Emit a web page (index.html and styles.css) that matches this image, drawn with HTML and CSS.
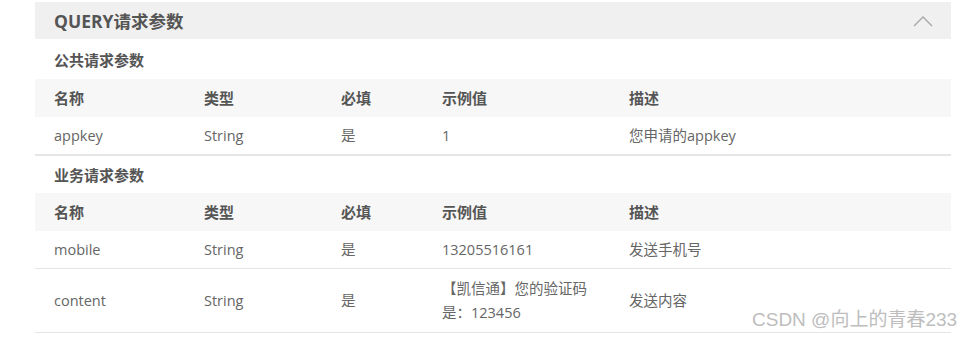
FILE: index.html
```html
<!DOCTYPE html>
<html lang="zh-CN">
<head>
<meta charset="utf-8">
<title>QUERY请求参数</title>
<link rel="stylesheet" href="styles.css">
</head>
<body>
<section class="panel">
  <header class="panel-head">
    <h2 class="panel-title">QUERY请求参数</h2>
    <svg class="chev" width="20" height="12" viewBox="0 0 20 12"><path d="M1 11 L10 2 L19 11" fill="none" stroke="#a8a8a8" stroke-width="1.4"/></svg>
  </header>

  <h3 class="group-title first">公共请求参数</h3>
  <div class="table table-end">
    <div class="row head"><div>名称</div><div>类型</div><div>必填</div><div>示例值</div><div>描述</div></div>
    <div class="row"><div>appkey</div><div>String</div><div>是</div><div>1</div><div>您申请的appkey</div></div>
  </div>

  <h3 class="group-title">业务请求参数</h3>
  <div class="table">
    <div class="row head"><div>名称</div><div>类型</div><div>必填</div><div>示例值</div><div>描述</div></div>
    <div class="row"><div>mobile</div><div>String</div><div>是</div><div>13205516161</div><div>发送手机号</div></div>
    <div class="row tall"><div>content</div><div>String</div><div>是</div><div>【凯信通】您的验证码是：123456</div><div>发送内容</div></div>
  </div>
</section>
<div class="watermark">CSDN @向上的青春233</div>
</body>
</html>
```

FILE: styles.css
```css
html, body {
  margin: 0;
  padding: 0;
  background: #fff;
}
body {
  font-family: "Open Sans", "Noto Sans CJK SC", sans-serif;
  color: #666;
  font-size: 14.5px;
  position: relative;
  width: 974px;
  height: 340px;
  overflow: hidden;
}
.panel {
  margin: 2px 0 0 35px;
  width: 916px;
}
.panel-head {
  height: 37px;
  background: #f0f0f0;
  display: flex;
  align-items: center;
  justify-content: space-between;
  padding: 0 18px 0 19px;
  box-sizing: border-box;
}
.panel-title {
  margin: 0;
  font-size: 17.5px;
  font-weight: bold;
  color: #555;
  line-height: 22px;
}
.chev {
  display: block;
  margin-top: 1px;
}
.group-title {
  margin: 0;
  font-size: 15px;
  font-weight: bold;
  color: #555;
  padding-left: 19px;
  height: 37px;
  display: flex;
  align-items: center;
}
.group-title.first {
  height: 40px;
}
.table-end {
  border-bottom: 1px solid #e5e5e5;
}
.row {
  display: grid;
  grid-template-columns: 150px 137px 101px 187px 1fr;
  align-items: center;
  min-height: 37px;
  border-bottom: 1px solid #e5e5e5;
  line-height: 24px;
}
.row > div {
  padding: 0 19px;
}
.row.head {
  background: #f7f7f7;
  border-bottom: none;
  min-height: 38px;
  font-size: 15px;
  font-weight: bold;
  color: #555;
}
.row.tall {
  min-height: 63px;
}
.watermark {
  position: absolute;
  left: 752px;
  top: 307px;
  font-family: "Liberation Sans", "Noto Sans CJK SC", sans-serif;
  font-size: 19px;
  color: #bdbdbd;
  white-space: nowrap;
  line-height: 26px;
}
```
